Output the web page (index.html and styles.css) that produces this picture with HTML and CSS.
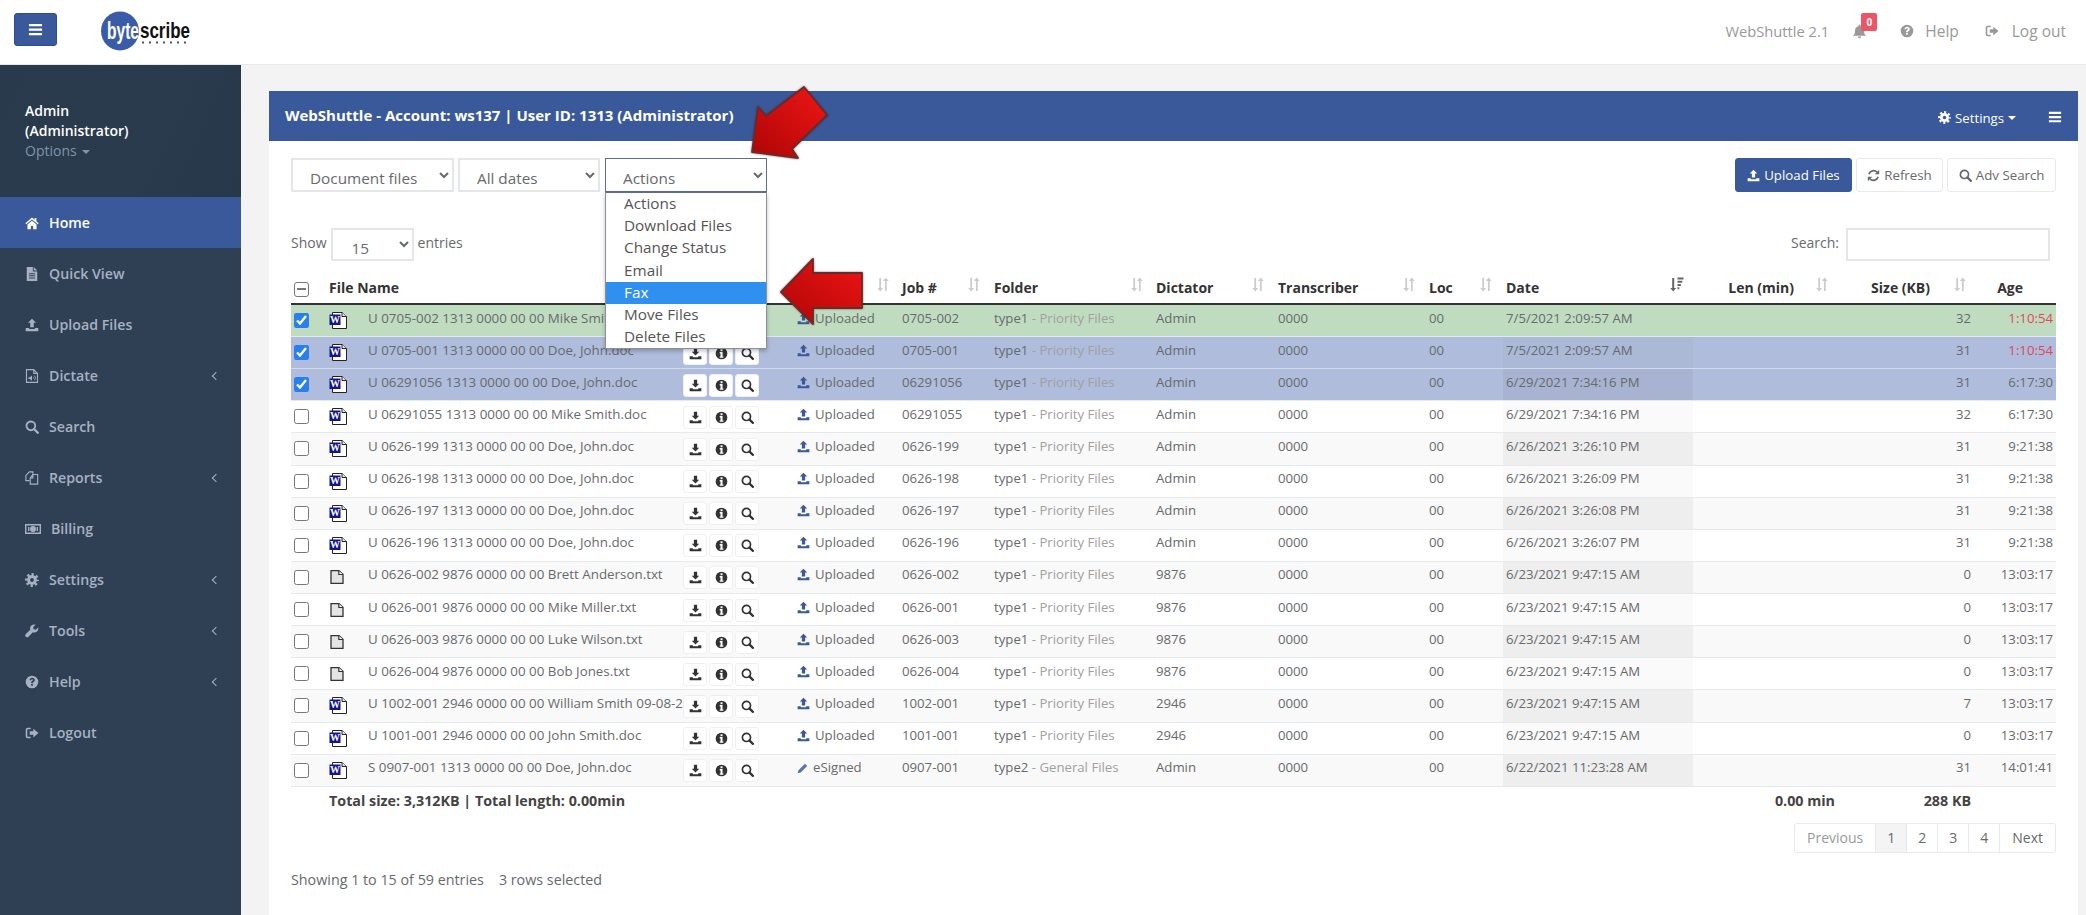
FILE: index.html
```html
<!DOCTYPE html>
<html lang="en">
<head>
<meta charset="utf-8">
<title>WebShuttle</title>
<link rel="stylesheet" href="styles.css">
</head>
<body>
<svg class="sprite" width="0" height="0" aria-hidden="true">
  <symbol id="i-bars" viewBox="0 0 16 16"><path d="M1 2h14v2.5H1zM1 6.8h14v2.5H1zM1 11.6h14v2.5H1z"/></symbol>
  <symbol id="i-home" viewBox="0 0 16 16"><path d="M8 1.8.4 8.3l1 1.2L8 3.9l6.6 5.6 1-1.2L13 6.1V2.4h-2v2zM2.8 9.8V15h3.9v-3.6h2.6V15h3.9V9.8L8 5.4z"/></symbol>
  <symbol id="i-file" viewBox="0 0 16 16"><path fill-rule="evenodd" d="M2 0h7v5h5v11H2zM4.500 7v1.200h7V7zM4.500 9.500v1.200h7V9.500zM4.500 12v1.200h7V12z"/><path d="M10 0l4 4h-4z"/></symbol>
  <symbol id="i-up" viewBox="0 0 16 16"><path d="M8 .8l4.600 4.700H10v5H6v-5H3.400zM.8 11.400h3.900v1.300h6.600v-1.300h3.900V15H.8z"/></symbol>
  <symbol id="i-down" viewBox="0 0 16 16"><path d="M6 .8h4v5h2.600L8 10.500 3.400 5.800H6zM.8 11.400h3.900v1.300h6.600v-1.300h3.900V15H.8z"/></symbol>
  <symbol id="i-search" viewBox="0 0 16 16"><circle cx="6.700" cy="6.700" r="5" fill="none" stroke="currentColor" stroke-width="2.100"/><path d="M10.300 10.300l4.300 4.300" fill="none" stroke="currentColor" stroke-width="2.700" stroke-linecap="round"/></symbol>
  <symbol id="i-info" viewBox="0 0 16 16"><path fill-rule="evenodd" d="M8 .8a7.200 7.200 0 1 0 0 14.400A7.200 7.200 0 0 0 8 .8zM6.800 2.800h2.500v2.300H6.800zM5.800 6.300h3.500v5.400h1v1.600H5.800v-1.600h1V7.900h-1z"/></symbol>
  <symbol id="i-gear" viewBox="0 0 16 16"><path fill-rule="evenodd" d="M8 2.400a5.600 5.600 0 1 0 0 11.200A5.600 5.600 0 0 0 8 2.400zM8 5.800a2.200 2.200 0 1 1 0 4.400 2.200 2.200 0 0 1 0-4.400z"/><circle cx="8" cy="8" r="6.500" fill="none" stroke="currentColor" stroke-width="2.800" stroke-dasharray="2.550 2.550" stroke-dashoffset="1.270"/></symbol>
  <symbol id="i-wrench" viewBox="0 0 16 16"><path d="M15 3.900l-2.700 2.700-2.400-.6-.6-2.400L12 .9A4.600 4.600 0 0 0 6 6.500l-5 5a2 2 0 0 0 3 3l5-5a4.600 4.600 0 0 0 6-5.600z"/></symbol>
  <symbol id="i-help" viewBox="0 0 16 16"><path fill-rule="evenodd" d="M8 .8a7.200 7.200 0 1 0 0 14.400A7.200 7.200 0 0 0 8 .8zM5.100 6C5.200 4.200 6.500 3 8.200 3c1.700 0 3 1.100 3 2.600 0 1.200-.7 1.800-1.400 2.300-.6.400-.8.700-.8 1.300H7c0-1.100.3-1.700 1.100-2.300.6-.4 1-.7 1-1.200s-.4-.9-1-.9c-.7 0-1.100.4-1.200 1.200zM7 10h2v2.200H7z"/></symbol>
  <symbol id="i-out" viewBox="0 0 16 16"><path d="M6.500 2H3a2.200 2.200 0 0 0-2.200 2.200v7.600A2.200 2.200 0 0 0 3 14h3.500v-1.800H3.300a.7.700 0 0 1-.7-.7V4.500a.7.700 0 0 1 .7-.7h3.200z"/><path d="M9.500 3 15.400 8l-5.900 5v-3H5.400V6h4.100z"/></symbol>
  <symbol id="i-money" viewBox="0 0 16 16"><path fill-rule="evenodd" d="M0 3h16v10H0zM1.400 4.400v7.200h13.200V4.400zM8 5a3 3 0 1 1 0 6 3 3 0 0 1 0-6z"/><path d="M3 6h1.400v4H3zM11.600 6H13v4h-1.400z"/></symbol>
  <symbol id="i-copy" viewBox="0 0 16 16"><path fill="none" stroke="currentColor" stroke-width="1.300" d="M5 11H1V5l4-4h4v3M6 15V8l3-4h5.500v11zM9 4v4H6"/></symbol>
  <symbol id="i-audio" viewBox="0 0 16 16"><path fill="none" stroke="currentColor" stroke-width="1.300" d="M1.700.7h8.300l4.300 4.300v10.300H1.700zM10 .7V5h4.300"/><path d="M4 9.500h1.500L8 7.500v6l-2.500-2H4zM9.500 8.500c1 .8 1 2.200 0 3zM11 7c1.800 1.400 1.800 4.600 0 6l-.5-.7c1.200-1.100 1.200-3.500 0-4.600z"/></symbol>
  <symbol id="i-bell" viewBox="0 0 16 16"><path d="M8 .6a1.100 1.100 0 0 1 1.100 1.100v.7c2.400.5 3.700 2.400 3.700 4.700 0 3 .9 4.400 2.300 5.500H.9c1.400-1.100 2.300-2.500 2.300-5.500 0-2.300 1.300-4.200 3.700-4.700v-.7A1.100 1.100 0 0 1 8 .6zM6.200 13.400h3.600a1.800 1.800 0 0 1-3.600 0z"/></symbol>
  <symbol id="i-refresh" viewBox="0 0 16 16"><path fill="none" stroke="currentColor" stroke-width="2.100" d="M2.300 6.500A6 6 0 0 1 12.500 4M13.700 9.500A6 6 0 0 1 3.500 12"/><path d="M15 1v5.500H9.500zM1 15V9.500h5.500z"/></symbol>
  <symbol id="i-pencil" viewBox="0 0 16 16"><path d="M11.500 1.200l3.300 3.300L5.500 13.800 1 15l1.200-4.500z"/></symbol>
  <symbol id="i-sort" viewBox="0 0 12 15"><path d="M2.300 1h1.800v10h2L3.200 14.500.3 11h2zM7.900 14V4h-2L8.800.5 11.700 4h-2v10z"/></symbol>
  <symbol id="i-sorted" viewBox="0 0 14 15"><path d="M2.200 1h2v10h2L3.200 14.500.2 11h2zM7.500.5h6v2h-6zM7.500 3.800h4.800v2H7.500zM7.500 7h3.400v2H7.500zM7.500 10.200h1.800v2H7.500z"/></symbol>
  <symbol id="i-word" viewBox="0 0 18 17"><path d="M3.500.5h9.500l4.500 4v12H3.500z" fill="#fff" stroke="#222"/><path d="M13 .5v4h4.500" fill="#e6e6e6" stroke="#222"/><rect x=".5" y="2.500" width="11" height="10.500" fill="#14148c"/><text x="6" y="11" class="word-w">W</text></symbol>
  <symbol id="i-txt" viewBox="0 0 14 14"><path d="M1 .7h8l4 3.600v9H1z" fill="#e4e4e4" stroke="#333" stroke-width="1.300"/><path d="M8.800.7v3.800H13" fill="#fff" stroke="#333" stroke-width="1.200"/></symbol>
</svg>

<header class="top">
  <button class="burger" type="button"><svg class="ic ic-15"><use href="#i-bars"/></svg></button>
  <svg class="logo" width="92" height="42" viewBox="0 0 92 42" role="img" aria-label="bytescribe">
    <ellipse cx="20" cy="20" rx="19" ry="19.500" fill="#3a5ba8"/>
    <text x="7" y="28" class="logo-a" textLength="32" lengthAdjust="spacingAndGlyphs">byte</text>
    <text x="40" y="27" class="logo-b" textLength="50" lengthAdjust="spacingAndGlyphs">scribe</text>
    <path d="M42 30.500h2v2h-2zM49 30.500h2v2h-2zM56 30.500h2v2h-2zM63 30.500h2v2h-2zM70 30.500h2v2h-2zM77 30.500h2v2h-2zM84 30.500h2v2h-2z" fill="#555"/>
  </svg>
  <nav class="top-right">
    <span class="ver">WebShuttle 2.1</span>
    <span class="bell"><svg class="ic ic-15"><use href="#i-bell"/></svg><b class="badge">0</b></span>
    <a class="tlink"><svg class="ic ic-14"><use href="#i-help"/></svg>Help</a>
    <a class="tlink"><svg class="ic ic-14"><use href="#i-out"/></svg>Log out</a>
  </nav>
</header>

<div class="shell">
  <aside class="side">
    <div class="profile">
      <div class="who">Admin<br>(Administrator)</div>
      <div class="opts">Options <i class="caret"></i></div>
    </div>
    <ul class="nav">
      <li class="on"><svg class="ic ic-14"><use href="#i-home"/></svg>Home</li>
      <li><svg class="ic ic-14"><use href="#i-file"/></svg>Quick View</li>
      <li><svg class="ic ic-14"><use href="#i-up"/></svg>Upload Files</li>
      <li><svg class="ic ic-14"><use href="#i-audio"/></svg>Dictate<i class="chev"></i></li>
      <li><svg class="ic ic-14"><use href="#i-search"/></svg>Search</li>
      <li><svg class="ic ic-14"><use href="#i-copy"/></svg>Reports<i class="chev"></i></li>
      <li><svg class="ic ic-16"><use href="#i-money"/></svg>Billing</li>
      <li><svg class="ic ic-14"><use href="#i-gear"/></svg>Settings<i class="chev"></i></li>
      <li><svg class="ic ic-14"><use href="#i-wrench"/></svg>Tools<i class="chev"></i></li>
      <li><svg class="ic ic-14"><use href="#i-help"/></svg>Help<i class="chev"></i></li>
      <li><svg class="ic ic-14"><use href="#i-out"/></svg>Logout</li>
    </ul>
  </aside>

  <main class="main">
    <section class="panel">
      <div class="panel-head">
        <h1>WebShuttle - Account: ws137 | User ID: 1313 (Administrator)</h1>
        <span class="head-tools">
          <span class="hset"><svg class="ic ic-13"><use href="#i-gear"/></svg>Settings <i class="caret caret-w"></i></span>
          <svg class="ic ic-hb"><use href="#i-bars"/></svg>
        </span>
      </div>
      <div class="panel-body">
        <div class="toolbar">
          <div class="picks">
            <select class="sel sel-doc"><option>Document files</option></select>
            <select class="sel sel-date"><option>All dates</option></select>
            <div class="pick">
              <select class="sel sel-act"><option>Actions</option></select>
              <ul class="menu">
                <li>Actions</li><li>Download Files</li><li>Change Status</li><li>Email</li>
                <li class="hl">Fax</li><li>Move Files</li><li>Delete Files</li>
              </ul>
            </div>
          </div>
          <div class="btns">
            <button class="btn btn-p" type="button"><svg class="ic ic-13"><use href="#i-up"/></svg>Upload Files</button>
            <button class="btn" type="button"><svg class="ic ic-13"><use href="#i-refresh"/></svg>Refresh</button>
            <button class="btn" type="button"><svg class="ic ic-13"><use href="#i-search"/></svg>Adv Search</button>
          </div>
        </div>

        <div class="filters">
          <label class="len">Show <select class="sel sel-len"><option>15</option></select> entries</label>
          <label class="find">Search: <input type="text" class="find-in"></label>
        </div>

        <table class="grid">
          <colgroup>
            <col class="c-chk"><col class="c-name"><col class="c-status"><col class="c-job"><col class="c-folder"><col class="c-dict"><col class="c-trans"><col class="c-loc"><col class="c-date"><col class="c-len"><col class="c-size"><col class="c-age">
          </colgroup>
          <thead>
            <tr>
              <th class="t-chk"><span class="minus"></span></th>
              <th class="t-name">File Name</th>
              <th class="t-status">Status<svg class="sort"><use href="#i-sort"/></svg></th>
              <th>Job #<svg class="sort"><use href="#i-sort"/></svg></th>
              <th>Folder<svg class="sort"><use href="#i-sort"/></svg></th>
              <th>Dictator<svg class="sort"><use href="#i-sort"/></svg></th>
              <th>Transcriber<svg class="sort"><use href="#i-sort"/></svg></th>
              <th class="t-loc">Loc<svg class="sort"><use href="#i-sort"/></svg></th>
              <th class="t-date">Date<svg class="sort sort-on"><use href="#i-sorted"/></svg></th>
              <th class="t-len">Len (min)<svg class="sort"><use href="#i-sort"/></svg></th>
              <th class="t-size">Size (KB)<svg class="sort"><use href="#i-sort"/></svg></th>
              <th class="t-age">Age</th>
            </tr>
          </thead>
          <tbody>
            <tr class="r-green">
              <td class="t-chk"><input type="checkbox" checked></td>
              <td class="t-name"><div class="fn"><svg class="fi"><use href="#i-word"/></svg><span class="nm">U 0705-002 1313 0000 00 00 Mike Smith.doc</span><span class="acts"><a><svg class="ic ic-13"><use href="#i-down"/></svg></a><a><svg class="ic ic-13"><use href="#i-info"/></svg></a><a><svg class="ic ic-13"><use href="#i-search"/></svg></a></span></div></td>
              <td class="t-status"><svg class="ic ic-st"><use href="#i-up"/></svg>Uploaded</td><td>0705-002</td><td>type1 <em>- Priority Files</em></td><td>Admin</td><td>0000</td><td class="t-loc">00</td><td class="t-date">7/5/2021 2:09:57 AM</td><td class="t-len"></td><td class="t-size">32</td><td class="t-age late">1:10:54</td>
            </tr>
            <tr class="r-sel">
              <td class="t-chk"><input type="checkbox" checked></td>
              <td class="t-name"><div class="fn"><svg class="fi"><use href="#i-word"/></svg><span class="nm">U 0705-001 1313 0000 00 00 Doe, John.doc</span><span class="acts"><a><svg class="ic ic-13"><use href="#i-down"/></svg></a><a><svg class="ic ic-13"><use href="#i-info"/></svg></a><a><svg class="ic ic-13"><use href="#i-search"/></svg></a></span></div></td>
              <td class="t-status"><svg class="ic ic-st"><use href="#i-up"/></svg>Uploaded</td><td>0705-001</td><td>type1 <em>- Priority Files</em></td><td>Admin</td><td>0000</td><td class="t-loc">00</td><td class="t-date">7/5/2021 2:09:57 AM</td><td class="t-len"></td><td class="t-size">31</td><td class="t-age late">1:10:54</td>
            </tr>
            <tr class="r-sel">
              <td class="t-chk"><input type="checkbox" checked></td>
              <td class="t-name"><div class="fn"><svg class="fi"><use href="#i-word"/></svg><span class="nm">U 06291056 1313 0000 00 00 Doe, John.doc</span><span class="acts"><a><svg class="ic ic-13"><use href="#i-down"/></svg></a><a><svg class="ic ic-13"><use href="#i-info"/></svg></a><a><svg class="ic ic-13"><use href="#i-search"/></svg></a></span></div></td>
              <td class="t-status"><svg class="ic ic-st"><use href="#i-up"/></svg>Uploaded</td><td>06291056</td><td>type1 <em>- Priority Files</em></td><td>Admin</td><td>0000</td><td class="t-loc">00</td><td class="t-date">6/29/2021 7:34:16 PM</td><td class="t-len"></td><td class="t-size">31</td><td class="t-age">6:17:30</td>
            </tr>
            <tr>
              <td class="t-chk"><input type="checkbox"></td>
              <td class="t-name"><div class="fn"><svg class="fi"><use href="#i-word"/></svg><span class="nm">U 06291055 1313 0000 00 00 Mike Smith.doc</span><span class="acts"><a><svg class="ic ic-13"><use href="#i-down"/></svg></a><a><svg class="ic ic-13"><use href="#i-info"/></svg></a><a><svg class="ic ic-13"><use href="#i-search"/></svg></a></span></div></td>
              <td class="t-status"><svg class="ic ic-st"><use href="#i-up"/></svg>Uploaded</td><td>06291055</td><td>type1 <em>- Priority Files</em></td><td>Admin</td><td>0000</td><td class="t-loc">00</td><td class="t-date">6/29/2021 7:34:16 PM</td><td class="t-len"></td><td class="t-size">32</td><td class="t-age">6:17:30</td>
            </tr>
            <tr>
              <td class="t-chk"><input type="checkbox"></td>
              <td class="t-name"><div class="fn"><svg class="fi"><use href="#i-word"/></svg><span class="nm">U 0626-199 1313 0000 00 00 Doe, John.doc</span><span class="acts"><a><svg class="ic ic-13"><use href="#i-down"/></svg></a><a><svg class="ic ic-13"><use href="#i-info"/></svg></a><a><svg class="ic ic-13"><use href="#i-search"/></svg></a></span></div></td>
              <td class="t-status"><svg class="ic ic-st"><use href="#i-up"/></svg>Uploaded</td><td>0626-199</td><td>type1 <em>- Priority Files</em></td><td>Admin</td><td>0000</td><td class="t-loc">00</td><td class="t-date">6/26/2021 3:26:10 PM</td><td class="t-len"></td><td class="t-size">31</td><td class="t-age">9:21:38</td>
            </tr>
            <tr>
              <td class="t-chk"><input type="checkbox"></td>
              <td class="t-name"><div class="fn"><svg class="fi"><use href="#i-word"/></svg><span class="nm">U 0626-198 1313 0000 00 00 Doe, John.doc</span><span class="acts"><a><svg class="ic ic-13"><use href="#i-down"/></svg></a><a><svg class="ic ic-13"><use href="#i-info"/></svg></a><a><svg class="ic ic-13"><use href="#i-search"/></svg></a></span></div></td>
              <td class="t-status"><svg class="ic ic-st"><use href="#i-up"/></svg>Uploaded</td><td>0626-198</td><td>type1 <em>- Priority Files</em></td><td>Admin</td><td>0000</td><td class="t-loc">00</td><td class="t-date">6/26/2021 3:26:09 PM</td><td class="t-len"></td><td class="t-size">31</td><td class="t-age">9:21:38</td>
            </tr>
            <tr>
              <td class="t-chk"><input type="checkbox"></td>
              <td class="t-name"><div class="fn"><svg class="fi"><use href="#i-word"/></svg><span class="nm">U 0626-197 1313 0000 00 00 Doe, John.doc</span><span class="acts"><a><svg class="ic ic-13"><use href="#i-down"/></svg></a><a><svg class="ic ic-13"><use href="#i-info"/></svg></a><a><svg class="ic ic-13"><use href="#i-search"/></svg></a></span></div></td>
              <td class="t-status"><svg class="ic ic-st"><use href="#i-up"/></svg>Uploaded</td><td>0626-197</td><td>type1 <em>- Priority Files</em></td><td>Admin</td><td>0000</td><td class="t-loc">00</td><td class="t-date">6/26/2021 3:26:08 PM</td><td class="t-len"></td><td class="t-size">31</td><td class="t-age">9:21:38</td>
            </tr>
            <tr>
              <td class="t-chk"><input type="checkbox"></td>
              <td class="t-name"><div class="fn"><svg class="fi"><use href="#i-word"/></svg><span class="nm">U 0626-196 1313 0000 00 00 Doe, John.doc</span><span class="acts"><a><svg class="ic ic-13"><use href="#i-down"/></svg></a><a><svg class="ic ic-13"><use href="#i-info"/></svg></a><a><svg class="ic ic-13"><use href="#i-search"/></svg></a></span></div></td>
              <td class="t-status"><svg class="ic ic-st"><use href="#i-up"/></svg>Uploaded</td><td>0626-196</td><td>type1 <em>- Priority Files</em></td><td>Admin</td><td>0000</td><td class="t-loc">00</td><td class="t-date">6/26/2021 3:26:07 PM</td><td class="t-len"></td><td class="t-size">31</td><td class="t-age">9:21:38</td>
            </tr>
            <tr>
              <td class="t-chk"><input type="checkbox"></td>
              <td class="t-name"><div class="fn"><svg class="fi fi-t"><use href="#i-txt"/></svg><span class="nm">U 0626-002 9876 0000 00 00 Brett Anderson.txt</span><span class="acts"><a><svg class="ic ic-13"><use href="#i-down"/></svg></a><a><svg class="ic ic-13"><use href="#i-info"/></svg></a><a><svg class="ic ic-13"><use href="#i-search"/></svg></a></span></div></td>
              <td class="t-status"><svg class="ic ic-st"><use href="#i-up"/></svg>Uploaded</td><td>0626-002</td><td>type1 <em>- Priority Files</em></td><td>9876</td><td>0000</td><td class="t-loc">00</td><td class="t-date">6/23/2021 9:47:15 AM</td><td class="t-len"></td><td class="t-size">0</td><td class="t-age">13:03:17</td>
            </tr>
            <tr>
              <td class="t-chk"><input type="checkbox"></td>
              <td class="t-name"><div class="fn"><svg class="fi fi-t"><use href="#i-txt"/></svg><span class="nm">U 0626-001 9876 0000 00 00 Mike Miller.txt</span><span class="acts"><a><svg class="ic ic-13"><use href="#i-down"/></svg></a><a><svg class="ic ic-13"><use href="#i-info"/></svg></a><a><svg class="ic ic-13"><use href="#i-search"/></svg></a></span></div></td>
              <td class="t-status"><svg class="ic ic-st"><use href="#i-up"/></svg>Uploaded</td><td>0626-001</td><td>type1 <em>- Priority Files</em></td><td>9876</td><td>0000</td><td class="t-loc">00</td><td class="t-date">6/23/2021 9:47:15 AM</td><td class="t-len"></td><td class="t-size">0</td><td class="t-age">13:03:17</td>
            </tr>
            <tr>
              <td class="t-chk"><input type="checkbox"></td>
              <td class="t-name"><div class="fn"><svg class="fi fi-t"><use href="#i-txt"/></svg><span class="nm">U 0626-003 9876 0000 00 00 Luke Wilson.txt</span><span class="acts"><a><svg class="ic ic-13"><use href="#i-down"/></svg></a><a><svg class="ic ic-13"><use href="#i-info"/></svg></a><a><svg class="ic ic-13"><use href="#i-search"/></svg></a></span></div></td>
              <td class="t-status"><svg class="ic ic-st"><use href="#i-up"/></svg>Uploaded</td><td>0626-003</td><td>type1 <em>- Priority Files</em></td><td>9876</td><td>0000</td><td class="t-loc">00</td><td class="t-date">6/23/2021 9:47:15 AM</td><td class="t-len"></td><td class="t-size">0</td><td class="t-age">13:03:17</td>
            </tr>
            <tr>
              <td class="t-chk"><input type="checkbox"></td>
              <td class="t-name"><div class="fn"><svg class="fi fi-t"><use href="#i-txt"/></svg><span class="nm">U 0626-004 9876 0000 00 00 Bob Jones.txt</span><span class="acts"><a><svg class="ic ic-13"><use href="#i-down"/></svg></a><a><svg class="ic ic-13"><use href="#i-info"/></svg></a><a><svg class="ic ic-13"><use href="#i-search"/></svg></a></span></div></td>
              <td class="t-status"><svg class="ic ic-st"><use href="#i-up"/></svg>Uploaded</td><td>0626-004</td><td>type1 <em>- Priority Files</em></td><td>9876</td><td>0000</td><td class="t-loc">00</td><td class="t-date">6/23/2021 9:47:15 AM</td><td class="t-len"></td><td class="t-size">0</td><td class="t-age">13:03:17</td>
            </tr>
            <tr>
              <td class="t-chk"><input type="checkbox"></td>
              <td class="t-name"><div class="fn"><svg class="fi"><use href="#i-word"/></svg><span class="nm">U 1002-001 2946 0000 00 00 William Smith 09-08-2021.doc</span><span class="acts"><a><svg class="ic ic-13"><use href="#i-down"/></svg></a><a><svg class="ic ic-13"><use href="#i-info"/></svg></a><a><svg class="ic ic-13"><use href="#i-search"/></svg></a></span></div></td>
              <td class="t-status"><svg class="ic ic-st"><use href="#i-up"/></svg>Uploaded</td><td>1002-001</td><td>type1 <em>- Priority Files</em></td><td>2946</td><td>0000</td><td class="t-loc">00</td><td class="t-date">6/23/2021 9:47:15 AM</td><td class="t-len"></td><td class="t-size">7</td><td class="t-age">13:03:17</td>
            </tr>
            <tr>
              <td class="t-chk"><input type="checkbox"></td>
              <td class="t-name"><div class="fn"><svg class="fi"><use href="#i-word"/></svg><span class="nm">U 1001-001 2946 0000 00 00 John Smith.doc</span><span class="acts"><a><svg class="ic ic-13"><use href="#i-down"/></svg></a><a><svg class="ic ic-13"><use href="#i-info"/></svg></a><a><svg class="ic ic-13"><use href="#i-search"/></svg></a></span></div></td>
              <td class="t-status"><svg class="ic ic-st"><use href="#i-up"/></svg>Uploaded</td><td>1001-001</td><td>type1 <em>- Priority Files</em></td><td>2946</td><td>0000</td><td class="t-loc">00</td><td class="t-date">6/23/2021 9:47:15 AM</td><td class="t-len"></td><td class="t-size">0</td><td class="t-age">13:03:17</td>
            </tr>
            <tr>
              <td class="t-chk"><input type="checkbox"></td>
              <td class="t-name"><div class="fn"><svg class="fi"><use href="#i-word"/></svg><span class="nm">S 0907-001 1313 0000 00 00 Doe, John.doc</span><span class="acts"><a><svg class="ic ic-13"><use href="#i-down"/></svg></a><a><svg class="ic ic-13"><use href="#i-info"/></svg></a><a><svg class="ic ic-13"><use href="#i-search"/></svg></a></span></div></td>
              <td class="t-status"><svg class="ic ic-st ic-pen"><use href="#i-pencil"/></svg>eSigned</td><td>0907-001</td><td>type2 <em>- General Files</em></td><td>Admin</td><td>0000</td><td class="t-loc">00</td><td class="t-date">6/22/2021 11:23:28 AM</td><td class="t-len"></td><td class="t-size">31</td><td class="t-age">14:01:41</td>
            </tr>
          </tbody>
          <tfoot>
            <tr>
              <td></td>
              <td class="t-name" colspan="8">Total size: 3,312KB | Total length: 0.00min</td>
              <td class="t-len">0.00 min</td>
              <td class="t-size">288 KB</td>
              <td></td>
            </tr>
          </tfoot>
        </table>

        <div class="pager">
          <a class="off">Previous</a><a class="cur">1</a><a>2</a><a>3</a><a>4</a><a>Next</a>
        </div>
        <p class="info"><span>Showing 1 to 15 of 59 entries</span><span>3 rows selected</span></p>
      </div>
    </section>
  </main>
</div>

<svg class="arrow arrow-a" width="90" height="86" viewBox="748 82 90 86" aria-hidden="true">
  <defs>
    <linearGradient id="ra" x1="1" y1="0" x2="0" y2="1"><stop offset="0" stop-color="#f01616"/><stop offset="1" stop-color="#ad0505"/></linearGradient>
  </defs>
  <path d="M752 152 758 107 766 116 804 87 827 115 792 149 798 158z" fill="url(#ra)" stroke="#6b2a2a" stroke-width="1.800" stroke-linejoin="round"/>
</svg>
<svg class="arrow arrow-b" width="90" height="74" viewBox="778 255 90 74" aria-hidden="true">
  <defs>
    <linearGradient id="rb" x1="1" y1="0" x2="0" y2="1"><stop offset="0" stop-color="#ee1414"/><stop offset="1" stop-color="#b00606"/></linearGradient>
  </defs>
  <path d="M781 292 813 259V273H862V308H813V324z" fill="url(#rb)" stroke="#6b2a2a" stroke-width="1.800" stroke-linejoin="round"/>
</svg>
</body>
</html>
```

FILE: styles.css
```css
* { box-sizing: border-box; }
html, body { margin: 0; height: 915px; overflow: hidden; }
body {
  position: relative;
  background: #f3f3f4;
  color: #676a6c;
  font-family: "Open Sans", "Liberation Sans", sans-serif;
  font-size: 13px;
}
.sprite { display: none; }
.ic { display: inline-block; fill: currentColor; flex: none; vertical-align: -2px; }
.ic-13 { width: 13px; height: 13px; }
.ic-14 { width: 14px; height: 14px; }
.ic-15 { width: 15px; height: 15px; }
.ic-16 { width: 16px; height: 16px; }
.word-w { font: bold 10px "Liberation Serif", serif; fill: #fff; text-anchor: middle; }

/* top bar */
.top {
  display: flex;
  align-items: center;
  height: 65px;
  padding: 0 20px 5px 14px;
  background: #fff;
  border-bottom: 1px solid #e7eaec;
}
.burger {
  display: flex;
  align-items: center;
  justify-content: center;
  width: 43px;
  height: 33px;
  padding: 0;
  background: #39599a;
  border: 1px solid #2f4d8a;
  border-radius: 3px;
  color: #fff;
}
.logo { margin-left: 43px; margin-top: 4px; }
.logo-a { font: bold 23px "Liberation Sans Narrow", "Liberation Sans", sans-serif; fill: #fff; }
.logo-b { font: bold 22px "Liberation Sans Narrow", "Liberation Sans", sans-serif; fill: #111; }
.top-right { display: flex; align-items: center; margin: 3px 0 0 auto; color: #999; font-size: 15.500px; }
.ver { margin-right: 23px; font-size: 14.700px; }
.bell { position: relative; display: flex; margin-right: 33px; }
.badge {
  position: absolute;
  top: -11px;
  left: 9px;
  width: 16px;
  height: 18px;
  background: #ed5565;
  border-radius: 2px;
  color: #fff;
  font-size: 10px;
  line-height: 18px;
  text-align: center;
}
.tlink { display: flex; align-items: center; gap: 13px; margin-right: 26px; }
.tlink:first-of-type { gap: 11px; }
.tlink:last-child { margin-right: 0; }

/* layout */
.shell { display: flex; height: 850px; }
.side { flex: none; width: 241px; background: #2f4054; }
.profile {
  height: 132px;
  padding: 36px 25px 0;
  background: linear-gradient(115deg, #283a4c 0%, #2a3b4e 55%, #26384a 100%);
  color: #fff;
  font-weight: 600;
  font-size: 14px;
  line-height: 20px;
}
.opts { color: #8095a8; font-weight: 400; }
.caret {
  display: inline-block;
  width: 0;
  height: 0;
  margin-left: 2px;
  vertical-align: 2px;
  border: 4px solid transparent;
  border-top-color: currentColor;
  border-bottom: 0;
}
.nav { margin: 0; padding: 0; list-style: none; }
.nav li {
  position: relative;
  display: flex;
  align-items: center;
  height: 51px;
  padding-left: 25px;
  color: #a7b1c2;
  font-weight: 600;
  font-size: 14.200px;
}
.nav li .ic { margin-right: 10px; }
.nav .on { background: #39599a; color: #fff; }
.chev {
  position: absolute;
  right: 22px;
  top: 23px;
  width: 6px;
  height: 6px;
  border-left: 1.5px solid currentColor;
  border-bottom: 1.5px solid currentColor;
  transform: rotate(45deg);
}

.main { flex: 1; min-width: 0; padding: 26px 8px 0 28px; }
.panel { height: 100%; background: #fff; }
.panel-head {
  display: flex;
  align-items: center;
  justify-content: space-between;
  height: 50px;
  padding: 0 16px;
  background: #39599a;
  color: #fff;
}
.panel-head h1 { margin: 0 0 2px; font-size: 15px; font-weight: 700; }
.head-tools { display: flex; align-items: center; }
.hset { display: flex; align-items: center; gap: 4px; margin: 3px 32px 0 0; font-size: 13.200px; }
.caret-w { margin-left: 0; vertical-align: 0; }
.ic-hb { width: 14px; height: 14px; margin-top: 1px; }

.panel-body { padding: 17px 22px 0; }
.toolbar { display: flex; justify-content: space-between; }
.picks { display: flex; gap: 4px; }
.pick { position: relative; margin-left: 1px; }
.sel {
  display: block;
  height: 34px;
  padding: 6px 0 0 13px;
  background: #fff;
  border: 2px solid #e5e6e7;
  color: #676a6c;
  font: 15.300px "Open Sans", sans-serif;
}
.sel-doc { width: 163px; }
.sel-date { width: 142px; }
.sel-act { width: 162px; border: 1px solid #5d6f8f; padding-left: 13px; }
.menu {
  position: absolute;
  z-index: 5;
  top: 34px;
  left: 0;
  width: 162px;
  margin: 0;
  padding: 0;
  list-style: none;
  background: #fff;
  border: 1px solid #8a8f99;
  border-top-color: #5d6f8f;
  box-shadow: 0 2px 4px rgba(0, 0, 0, .25);
  color: #555;
  font-size: 15.300px;
}
.menu li { height: 22.200px; padding-left: 18px; line-height: 21px; }
.menu .hl { background: #2f90f0; color: #fff; }
.btns { display: flex; gap: 4px; }
.btn {
  display: flex;
  align-items: center;
  gap: 4px;
  height: 34px;
  padding: 0 10.500px;
  background: #fff;
  border: 1px solid #e7eaec;
  border-radius: 3px;
  color: #676a6c;
  font: 13.300px "Open Sans", sans-serif;
}
.btn-p { background: #39599a; border-color: #39599a; color: #fff; padding: 0 11px; }

.filters { display: flex; justify-content: space-between; margin-top: 36px; padding-right: 6px; font-size: 14px; }
.len, .find { display: flex; align-items: flex-start; gap: 4px; line-height: 30px; }
.sel-len { width: 83px; height: 33px; padding-left: 15px; }
.find { gap: 7px; }
.find-in { width: 204px; height: 33px; background: #fff; border: 2px solid #e5e6e7; }

/* table */
.grid { width: 1765px; table-layout: fixed; border-collapse: collapse; }
.c-chk { width: 34px; }
.c-name { width: 467px; }
.c-status { width: 100px; }
.c-job { width: 92px; }
.c-folder { width: 162px; }
.c-dict { width: 122px; }
.c-trans { width: 152px; }
.c-loc { width: 83px; }
.c-date { width: 190px; }
.c-len { width: 145px; }
.c-size { width: 137px; }
.c-age { width: 81px; }
.grid th {
  position: relative;
  height: 43px;
  padding: 10px 10px 0;
  border-bottom: 2px solid #333;
  color: #333;
  font-size: 14px;
  font-weight: 700;
  text-align: left;
  white-space: nowrap;
}
.grid tbody td {
  height: 32.130px;
  padding: 0 10px 6px;
  border-bottom: 1px solid #e7eaec;
  font-size: 13.200px;
  white-space: nowrap;
}
.grid em { color: #a0a0a0; font-style: normal; }
.grid tbody tr:nth-child(odd) { background: #f9f9f9; }
.grid tbody td.t-date { background: rgba(0, 0, 0, .02); }
.grid tbody tr:nth-child(odd) td.t-date { background: rgba(0, 0, 0, .045); }
.grid tbody tr.r-green { background: #c0dcc0; }
.grid tbody tr.r-green td.t-date { background: none; }
.grid tbody tr.r-green td { border-bottom-color: #e3e8f2; }
.grid tbody tr.r-sel { background: #afbcdb; }
.grid tbody .r-sel td { border-bottom-color: #d2daeb; }
.grid tbody .r-sel + .r-sel td { border-bottom-color: #e7eaec; }
.grid tbody td.late { color: #e0475a; }
.grid th.t-chk, .grid tbody td.t-chk { padding: 0 0 0 3px; }
.t-chk input { display: block; width: 15px; height: 15px; margin: 0; accent-color: #2a7fe8; }
.minus {
  display: block;
  position: relative;
  width: 15px;
  height: 15px;
  margin-top: 14px;
  border: 1px solid #777;
  border-radius: 3px;
}
.minus::after { content: ""; position: absolute; left: 2px; right: 2px; top: 5px; height: 2px; background: #777; }
.grid th.t-name, .grid tfoot .t-name { padding-left: 4px; }
.grid tbody td.t-name { padding: 0 33px 0 4px; }
.fn { display: flex; align-items: center; height: 31px; }
.fi { flex: none; width: 18px; height: 17px; margin-right: 21px; }
.fi-t { width: 14px; height: 14px; margin: 0 24px 0 1px; }
.nm { flex: 1; min-width: 0; margin-top: -6px; overflow: hidden; font-size: 13.350px; }
.acts { display: flex; gap: 2px; flex: none; margin-top: 1px; }
.acts a {
  display: flex;
  align-items: center;
  justify-content: center;
  width: 24px;
  height: 23px;
  background: #fff;
  border: 1px solid #eef0f1;
  border-radius: 3px;
  color: #333;
}
.grid th.t-status, .grid tbody td.t-status { padding-left: 5px; }
.ic-st { width: 13px; height: 13px; margin-right: 5px; color: #39599a; }
.ic-pen { width: 11px; height: 11px; color: #5a74aa; }
.grid th.t-loc, .grid tbody td.t-loc { padding-left: 9px; }
.grid th.t-date, .grid tbody td.t-date { padding-left: 3px; }
.sort { position: absolute; top: 16px; right: 4px; width: 12px; height: 15px; fill: #ccc; }
.sort-on { fill: #666; width: 14px; right: 9px; }
.grid th:nth-child(3) .sort { right: 3px; }
.grid th:nth-child(5) .sort { right: 3px; }
.grid th:nth-child(7) .sort { right: 5px; }
.grid th:nth-child(8) .sort { right: 11px; }
.grid th:nth-child(10) .sort { right: 10px; }
.grid th:nth-child(11) .sort { right: 9px; }
.grid .t-len, .grid .t-size, .grid .t-age { text-align: right; }
.grid th.t-len { padding-right: 44px; }
.grid th.t-size { padding-right: 45px; }
.grid th.t-age { padding-right: 33px; }
.grid tbody td.t-size { padding-right: 4px; }
.grid tbody td.t-age { padding-right: 3px; }
.grid tfoot td {
  height: 29px;
  padding: 0 4px 2px;
  color: #444;
  font-size: 14.300px;
  font-weight: 700;
  white-space: nowrap;
}
.grid tfoot .t-len { padding-right: 3px; }

.pager {
  display: flex;
  justify-content: flex-end;
  width: 1765px;
  margin-top: 8px;
  font-size: 14px;
}
.pager a {
  display: block;
  height: 30px;
  padding: 0 11px;
  border: 1px solid #e7eaec;
  border-left-width: 0;
  line-height: 28px;
}
.pager a:first-child { padding: 0 12px; border-left-width: 1px; border-radius: 3px 0 0 3px; }
.pager a:last-child { padding: 0 12px; border-radius: 0 3px 3px 0; }
.pager .off { color: #999; }
.pager .cur { background: #f4f4f4; }
.info { display: flex; gap: 15px; margin: 17px 0 0; font-size: 14.300px; line-height: 20px; }

/* annotation arrows laid over the screenshot */
.arrow { position: absolute; z-index: 10; filter: drop-shadow(0 0 1px rgba(70, 20, 20, .6)); }
.arrow-a { left: 748px; top: 82px; }
.arrow-b { left: 778px; top: 255px; }
```
